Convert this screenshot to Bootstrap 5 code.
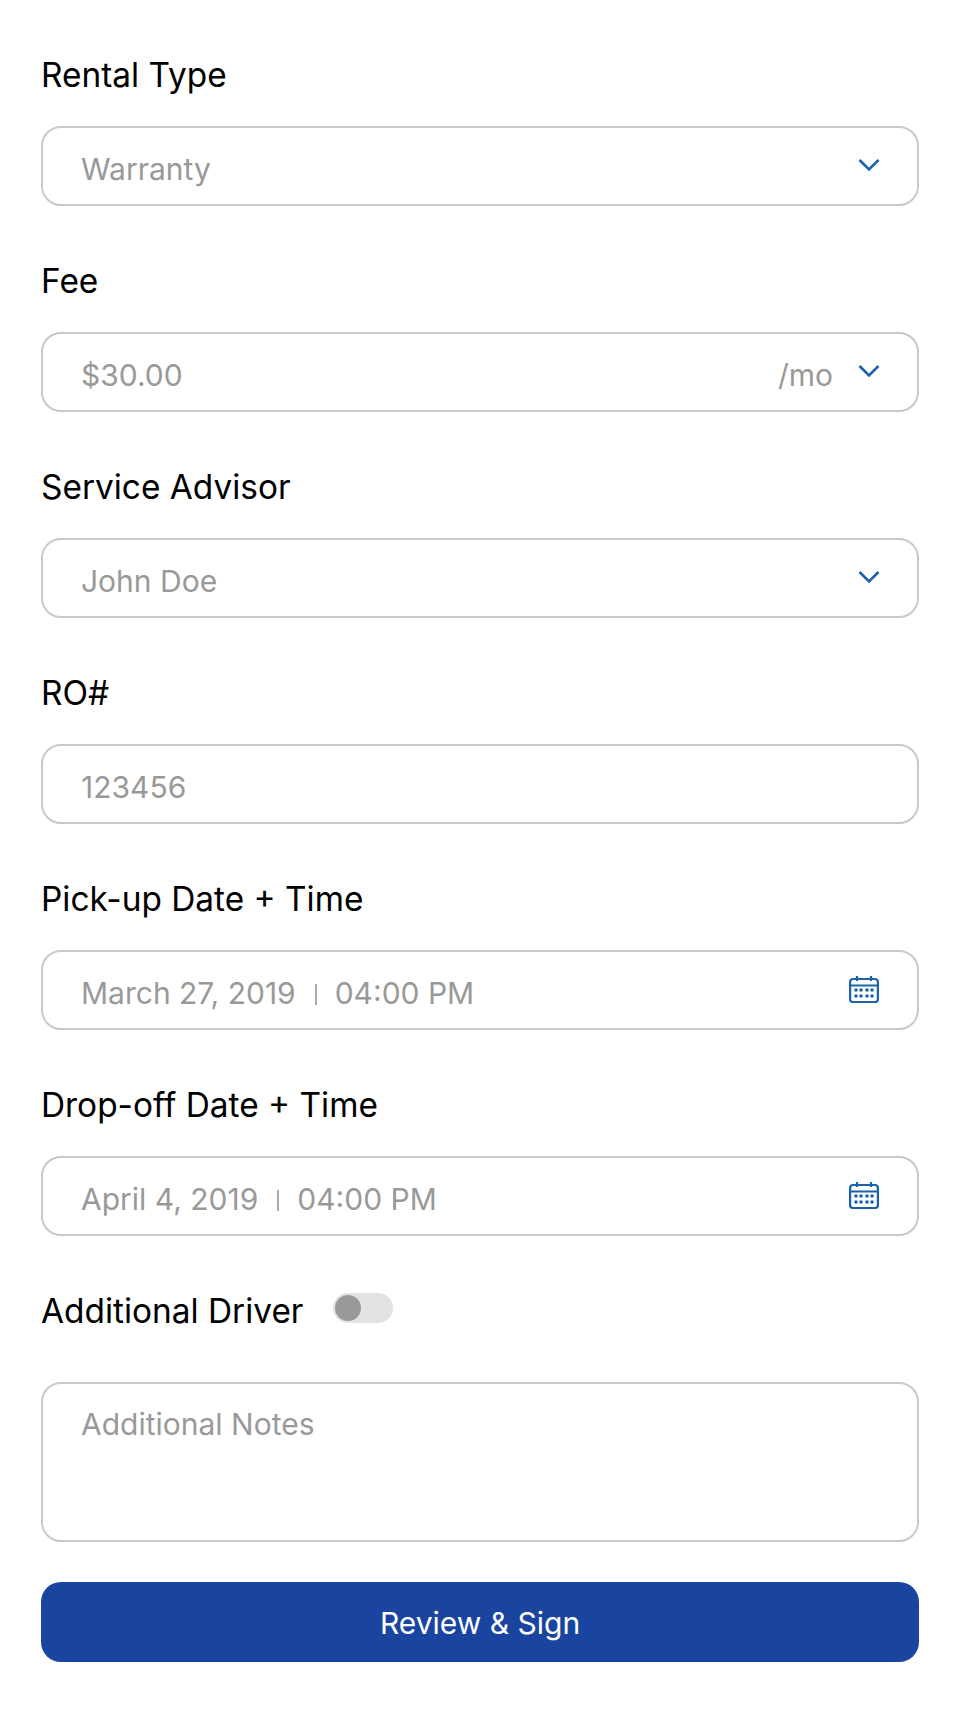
<!DOCTYPE html>
<html lang="en">
<head>
<meta charset="utf-8">
<title>Rental Form</title>
<link href="https://cdn.jsdelivr.net/npm/bootstrap@5.3.0/dist/css/bootstrap.min.css" rel="stylesheet">
<style>
html,body{background:#fff;}
body{font-family:Inter,"Liberation Sans",sans-serif;color:#000;}
.rent-form{padding:55px 41px 60px;height:1722px;}
.rent-field{margin-bottom:55px;}
.rent-label{display:block;font-size:33.4px;line-height:40px;margin:0 0 31px;color:#000;}
.rent-box{display:flex;align-items:center;height:80px;border:2px solid #c9c9c9;border-radius:20px;padding:6px 38px 0;background:#fff;font-size:30px;color:#999;}
.rent-box .rent-val{flex:1 1 auto;}
.rent-sep{display:inline-block;width:2px;height:21px;background:#aaa;margin:0 18px 0 19px;vertical-align:-1px;}
.rent-unit{margin-right:25px;}
.rent-ico{flex:none;display:block;}
.rent-chev{margin-top:-8px;margin-right:-1px;}
.rent-cal{margin-top:-8px;margin-right:0;}
.rent-toggle-row{display:flex;align-items:center;gap:30px;height:40px;margin-bottom:51px;}
.rent-toggle-row .rent-label{margin:0;}
.rent-switch{width:60px;height:30px;border-radius:15px;background:#e2e2e2;position:relative;top:-3px;}
.rent-knob{position:absolute;left:2px;top:2px;width:26px;height:26px;border-radius:50%;background:#999;}
.rent-notes{height:160px;align-items:flex-start;padding-top:20px;margin-bottom:40px;line-height:40px;}
.rent-btn{display:block;width:100%;height:80px;border:0;border-radius:20px;background:#1945a0;color:#fff;font-size:30px;padding-top:8px;}
.rent-btn:hover,.rent-btn:active{background:#1945a0!important;color:#fff!important;}
</style>
</head>
<body>
<form class="rent-form">
  <div class="rent-field">
    <label class="rent-label">Rental Type</label>
    <div class="rent-box"><span class="rent-val">Warranty</span>
      <svg class="rent-ico rent-chev" width="22" height="14" viewBox="0 0 22 14" fill="none" stroke="#1a62ae" stroke-width="2.6"><path d="M1.5 2 11 11.5 20.5 2"/></svg>
    </div>
  </div>
  <div class="rent-field">
    <label class="rent-label">Fee</label>
    <div class="rent-box"><span class="rent-val">$30.00</span><span class="rent-unit">/mo</span>
      <svg class="rent-ico rent-chev" width="22" height="14" viewBox="0 0 22 14" fill="none" stroke="#1a62ae" stroke-width="2.6"><path d="M1.5 2 11 11.5 20.5 2"/></svg>
    </div>
  </div>
  <div class="rent-field">
    <label class="rent-label">Service Advisor</label>
    <div class="rent-box"><span class="rent-val">John Doe</span>
      <svg class="rent-ico rent-chev" width="22" height="14" viewBox="0 0 22 14" fill="none" stroke="#1a62ae" stroke-width="2.6"><path d="M1.5 2 11 11.5 20.5 2"/></svg>
    </div>
  </div>
  <div class="rent-field">
    <label class="rent-label">RO#</label>
    <div class="rent-box"><span class="rent-val">123456</span></div>
  </div>
  <div class="rent-field">
    <label class="rent-label">Pick-up Date + Time</label>
    <div class="rent-box"><span class="rent-val">March 27, 2019<span class="rent-sep"></span>04:00 PM</span>
      <svg class="rent-ico rent-cal" width="30" height="28" viewBox="0 0 30 28" fill="none" stroke="#1a62ae" stroke-width="2.2"><rect x="1.1" y="4" width="27.8" height="23" rx="3"/><path d="M1 10.5h28M8 1v5M22 1v5"/><g fill="#1a62ae" stroke="none"><circle cx="7" cy="15" r="1.8"/><circle cx="12" cy="15" r="1.8"/><circle cx="18" cy="15" r="1.8"/><circle cx="23" cy="15" r="1.8"/><circle cx="7" cy="21" r="1.8"/><circle cx="12" cy="21" r="1.8"/><circle cx="18" cy="21" r="1.8"/><circle cx="23" cy="21" r="1.8"/></g></svg>
    </div>
  </div>
  <div class="rent-field">
    <label class="rent-label">Drop-off Date + Time</label>
    <div class="rent-box"><span class="rent-val">April 4, 2019<span class="rent-sep"></span>04:00 PM</span>
      <svg class="rent-ico rent-cal" width="30" height="28" viewBox="0 0 30 28" fill="none" stroke="#1a62ae" stroke-width="2.2"><rect x="1.1" y="4" width="27.8" height="23" rx="3"/><path d="M1 10.5h28M8 1v5M22 1v5"/><g fill="#1a62ae" stroke="none"><circle cx="7" cy="15" r="1.8"/><circle cx="12" cy="15" r="1.8"/><circle cx="18" cy="15" r="1.8"/><circle cx="23" cy="15" r="1.8"/><circle cx="7" cy="21" r="1.8"/><circle cx="12" cy="21" r="1.8"/><circle cx="18" cy="21" r="1.8"/><circle cx="23" cy="21" r="1.8"/></g></svg>
    </div>
  </div>
  <div class="rent-toggle-row">
    <span class="rent-label">Additional Driver</span>
    <span class="rent-switch"><span class="rent-knob"></span></span>
  </div>
  <div class="rent-box rent-notes"><span class="rent-val">Additional Notes</span></div>
  <button type="button" class="btn rent-btn">Review &amp; Sign</button>
</form>
<script src="https://cdn.jsdelivr.net/npm/bootstrap@5.3.0/dist/js/bootstrap.bundle.min.js"></script>
</body>
</html>
